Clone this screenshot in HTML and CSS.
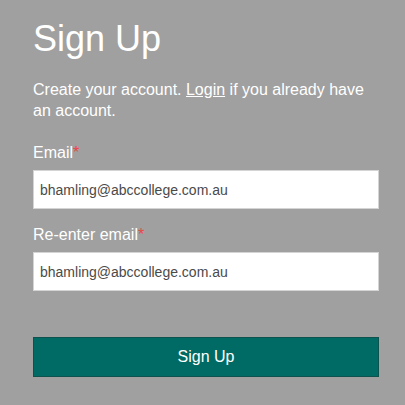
FILE: index.html
```html
<!DOCTYPE html>
<html lang="en">
<head>
<meta charset="utf-8">
<title>Sign Up</title>
<link rel="stylesheet" href="styles.css">
</head>
<body>
<main class="page">
  <h1 class="title">Sign Up</h1>
  <p class="intro">Create your account. <a class="link" href="#">Login</a> if you already have an account.</p>
  <form class="form">
    <div class="field">
      <label class="label" for="email">Email<span class="req">*</span></label>
      <input class="input" id="email" type="email" value="bhamling@abccollege.com.au">
    </div>
    <div class="field">
      <label class="label" for="email2">Re-enter email<span class="req">*</span></label>
      <input class="input" id="email2" type="email" value="bhamling@abccollege.com.au">
    </div>
    <button class="submit" type="button">Sign Up</button>
  </form>
</main>
</body>
</html>
```
FILE: styles.css
```css
html, body {
  margin: 0;
  padding: 0;
  background: #a0a0a0;
}
body {
  font-family: "Liberation Sans", Arial, sans-serif;
  color: #ffffff;
}
.page {
  padding: 19px 26px 0 33px;
}
.title {
  margin: 0;
  font-size: 36px;
  line-height: 40px;
  font-weight: normal;
  color: #ffffff;
}
.intro {
  margin: 20px 0 0;
  font-size: 16px;
  line-height: 21px;
  color: #ffffff;
}
.link {
  color: #ffffff;
  text-decoration: underline;
}
.form {
  display: flex;
  flex-direction: column;
  margin-top: 22px;
}
.field {
  display: flex;
  flex-direction: column;
  gap: 7px;
  margin-bottom: 16px;
}
.label {
  font-size: 16px;
  line-height: 20px;
  color: #ffffff;
}
.req {
  color: #e8474a;
}
.input {
  box-sizing: border-box;
  width: 100%;
  height: 39px;
  margin: 0;
  padding: 0 6px;
  border: 1px solid #d4d4d4;
  background: #ffffff;
  font-family: "Liberation Sans", Arial, sans-serif;
  font-size: 14px;
  color: #4a4a4a;
  outline: none;
}
.submit {
  box-sizing: border-box;
  width: 100%;
  height: 40px;
  margin-top: 30px;
  border: 1px solid #0d524d;
  background: #006b64;
  color: #ffffff;
  font-family: "Liberation Sans", Arial, sans-serif;
  font-size: 16px;
  cursor: pointer;
}
```
